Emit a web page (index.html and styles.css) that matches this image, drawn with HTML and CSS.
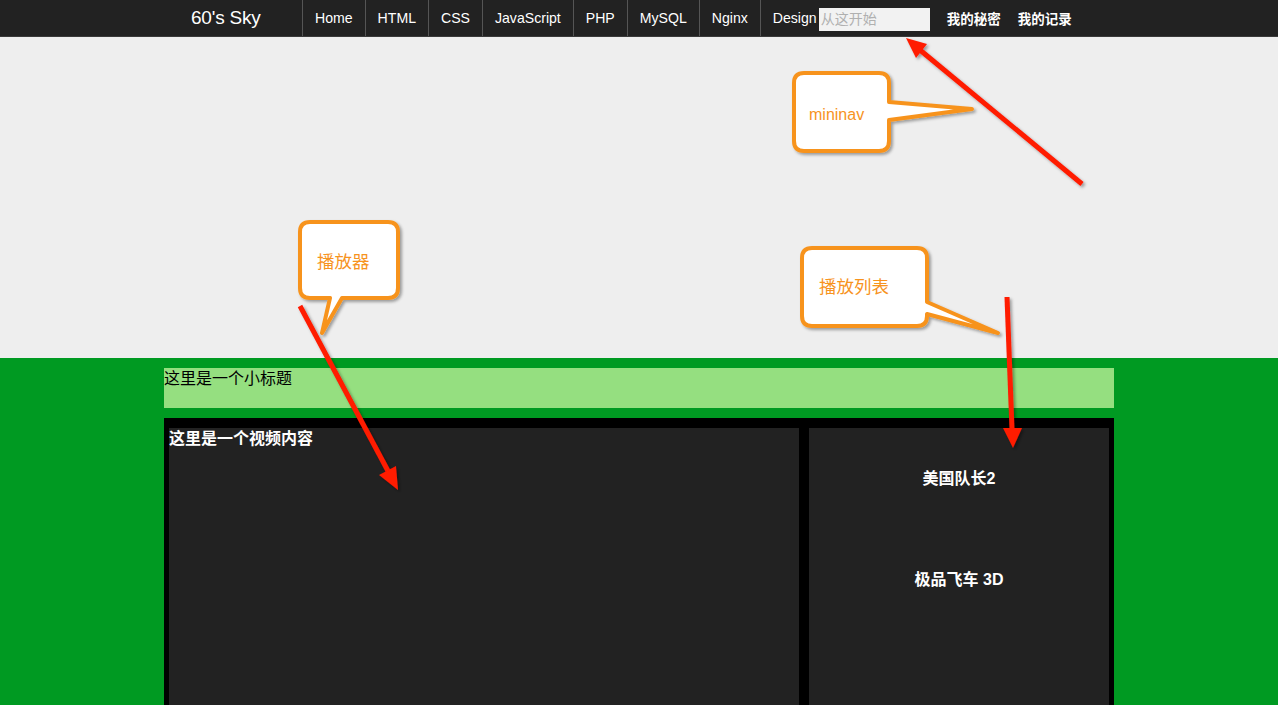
FILE: index.html
```html
<!DOCTYPE html>
<html lang="zh">
<head>
<meta charset="utf-8">
<title>60's Sky</title>
<link rel="stylesheet" href="styles.css">
</head>
<body>
<header class="topbar">
  <div class="topbar-inner">
    <a class="logo" href="#">60's Sky</a>
    <ul class="nav">
      <li><a href="#">Home</a></li>
      <li><a href="#">HTML</a></li>
      <li><a href="#">CSS</a></li>
      <li><a href="#">JavaScript</a></li>
      <li><a href="#">PHP</a></li>
      <li><a href="#">MySQL</a></li>
      <li><a href="#">Nginx</a></li>
      <li class="last"><a href="#">Design</a></li>
    </ul>
    <input class="search" type="text" placeholder="从这开始">
    <ul class="mininav">
      <li><a href="#">我的秘密</a></li>
      <li><a href="#">我的记录</a></li>
    </ul>
  </div>
</header>

<section class="banner"></section>

<section class="main">
  <div class="container">
    <h2 class="subtitle">这里是一个小标题</h2>
    <div class="stage">
      <div class="player">这里是一个视频内容</div>
      <ul class="playlist">
        <li>美国队长2</li>
        <li>极品飞车 3D</li>
      </ul>
    </div>
  </div>
</section>

<div class="annotations">
  <svg width="1278" height="705" viewBox="0 0 1278 705" xmlns="http://www.w3.org/2000/svg">
    <defs>
      <filter id="sh" x="-20%" y="-20%" width="140%" height="140%">
        <feDropShadow dx="2" dy="2" stdDeviation="1.5" flood-color="#000" flood-opacity="0.35"/>
      </filter>
    </defs>
    <!-- callouts -->
    <g filter="url(#sh)" fill="#ffffff" stroke="#f7931e" stroke-width="4" stroke-linejoin="round">
      <path d="M804,73 H879 Q889,73 889,83 V102 L972,109 L889,120 V141 Q889,151 879,151 H804 Q794,151 794,141 V83 Q794,73 804,73 Z"/>
      <path d="M310,222 H388 Q398,222 398,232 V288 Q398,298 388,298 H342 L322,333 L330,298 H310 Q300,298 300,288 V232 Q300,222 310,222 Z"/>
      <path d="M812,248 H917 Q927,248 927,258 V302 L998,333 L927,314 V316 Q927,326 917,326 H812 Q802,326 802,316 V258 Q802,248 812,248 Z"/>
    </g>
    <g class="callout-text" fill="#f7931e">
      <text x="809" y="120" font-size="16">mininav</text>
      <text x="317" y="268" font-size="17.5">播放器</text>
      <text x="819" y="293" font-size="17.5">播放列表</text>
    </g>
    <!-- arrows -->
    <g filter="url(#sh)">
      <line x1="1082" y1="184" x2="920" y2="50" stroke="#ff1a00" stroke-width="5"/>
      <polygon points="906,38 927,44 916,58" fill="#ff1a00"/>
      <line x1="300" y1="306" x2="388" y2="471" stroke="#ff1a00" stroke-width="5"/>
      <polygon points="398,490 379,475 396,466" fill="#ff1a00"/>
      <line x1="1007" y1="297" x2="1012" y2="430" stroke="#ff1a00" stroke-width="5"/>
      <polygon points="1013,448 1003,428 1022,428" fill="#ff1a00"/>
    </g>
  </svg>
</div>
</body>
</html>
```

FILE: styles.css
```css
html, body {
  margin: 0;
  padding: 0;
}

body {
  position: relative;
  background: #009a22;
  font-family: "Liberation Sans", "Noto Sans CJK SC", sans-serif;
  overflow: hidden;
  height: 705px;
}

a {
  color: inherit;
  text-decoration: none;
}

ul {
  list-style: none;
  margin: 0;
  padding: 0;
}

/* top bar */
.topbar {
  background: #222222;
  height: 37px;
  border-bottom: 1px solid #3a3a3a;
  box-sizing: border-box;
}

.topbar-inner {
  width: 950px;
  margin: 0 auto;
  display: flex;
  align-items: center;
  height: 100%;
  color: #ffffff;
}

.logo {
  width: 138px;
  box-sizing: border-box;
  padding-left: 27px;
  font-size: 19px;
  letter-spacing: -0.2px;
  line-height: 36px;
}

.nav {
  display: flex;
  height: 100%;
}

.nav li {
  border-left: 1px solid #555555;
  padding: 0 12px;
  font-size: 14.1px;
  line-height: 36px;
}

.nav li.last {
  padding-right: 2px;
}

.search {
  width: 111px;
  height: 23px;
  margin: 2px 0 0;
  box-sizing: border-box;
  border: none;
  background: #f2f2f2;
  padding: 0 2px;
  font-family: "Liberation Sans", "Noto Sans CJK SC", sans-serif;
  font-size: 14px;
  outline: none;
}

.search::placeholder {
  color: #b0b0b0;
}

.mininav {
  display: flex;
  margin-left: 17px;
  gap: 17px;
}

.mininav li {
  font-family: "Noto Sans CJK SC", sans-serif;
  font-size: 13.5px;
  font-weight: bold;
}

/* banner */
.banner {
  height: 321px;
  background: #eeeeee;
}

/* main */
.main {
  padding-top: 10px;
}

.container {
  width: 950px;
  margin: 0 auto;
}

.subtitle {
  margin: 0 0 10px;
  height: 40px;
  background: #95df80;
  font-family: "Noto Sans CJK SC", sans-serif;
  font-weight: normal;
  font-size: 16px;
  line-height: 18px;
  color: #000000;
}

.stage {
  background: #000000;
  padding: 10px 5px;
  display: flex;
  gap: 10px;
}

.player {
  width: 630px;
  height: 400px;
  background: #222222;
  color: #ffffff;
  font-family: "Noto Sans CJK SC", sans-serif;
  font-weight: bold;
  font-size: 16px;
  line-height: 18px;
}

.playlist {
  width: 300px;
  height: 400px;
  background: #222222;
  color: #ffffff;
  text-align: center;
  font-family: "Liberation Sans", "Noto Sans CJK SC", sans-serif;
  font-weight: bold;
  font-size: 16px;
}

.playlist li {
  height: 101px;
  line-height: 101px;
}

/* annotation overlay */
.annotations {
  position: absolute;
  top: 0;
  left: 0;
  width: 1278px;
  height: 705px;
  pointer-events: none;
}

.annotations svg {
  display: block;
}

.callout-text text {
  font-family: "Liberation Sans", "Noto Sans CJK SC", sans-serif;
}
```
